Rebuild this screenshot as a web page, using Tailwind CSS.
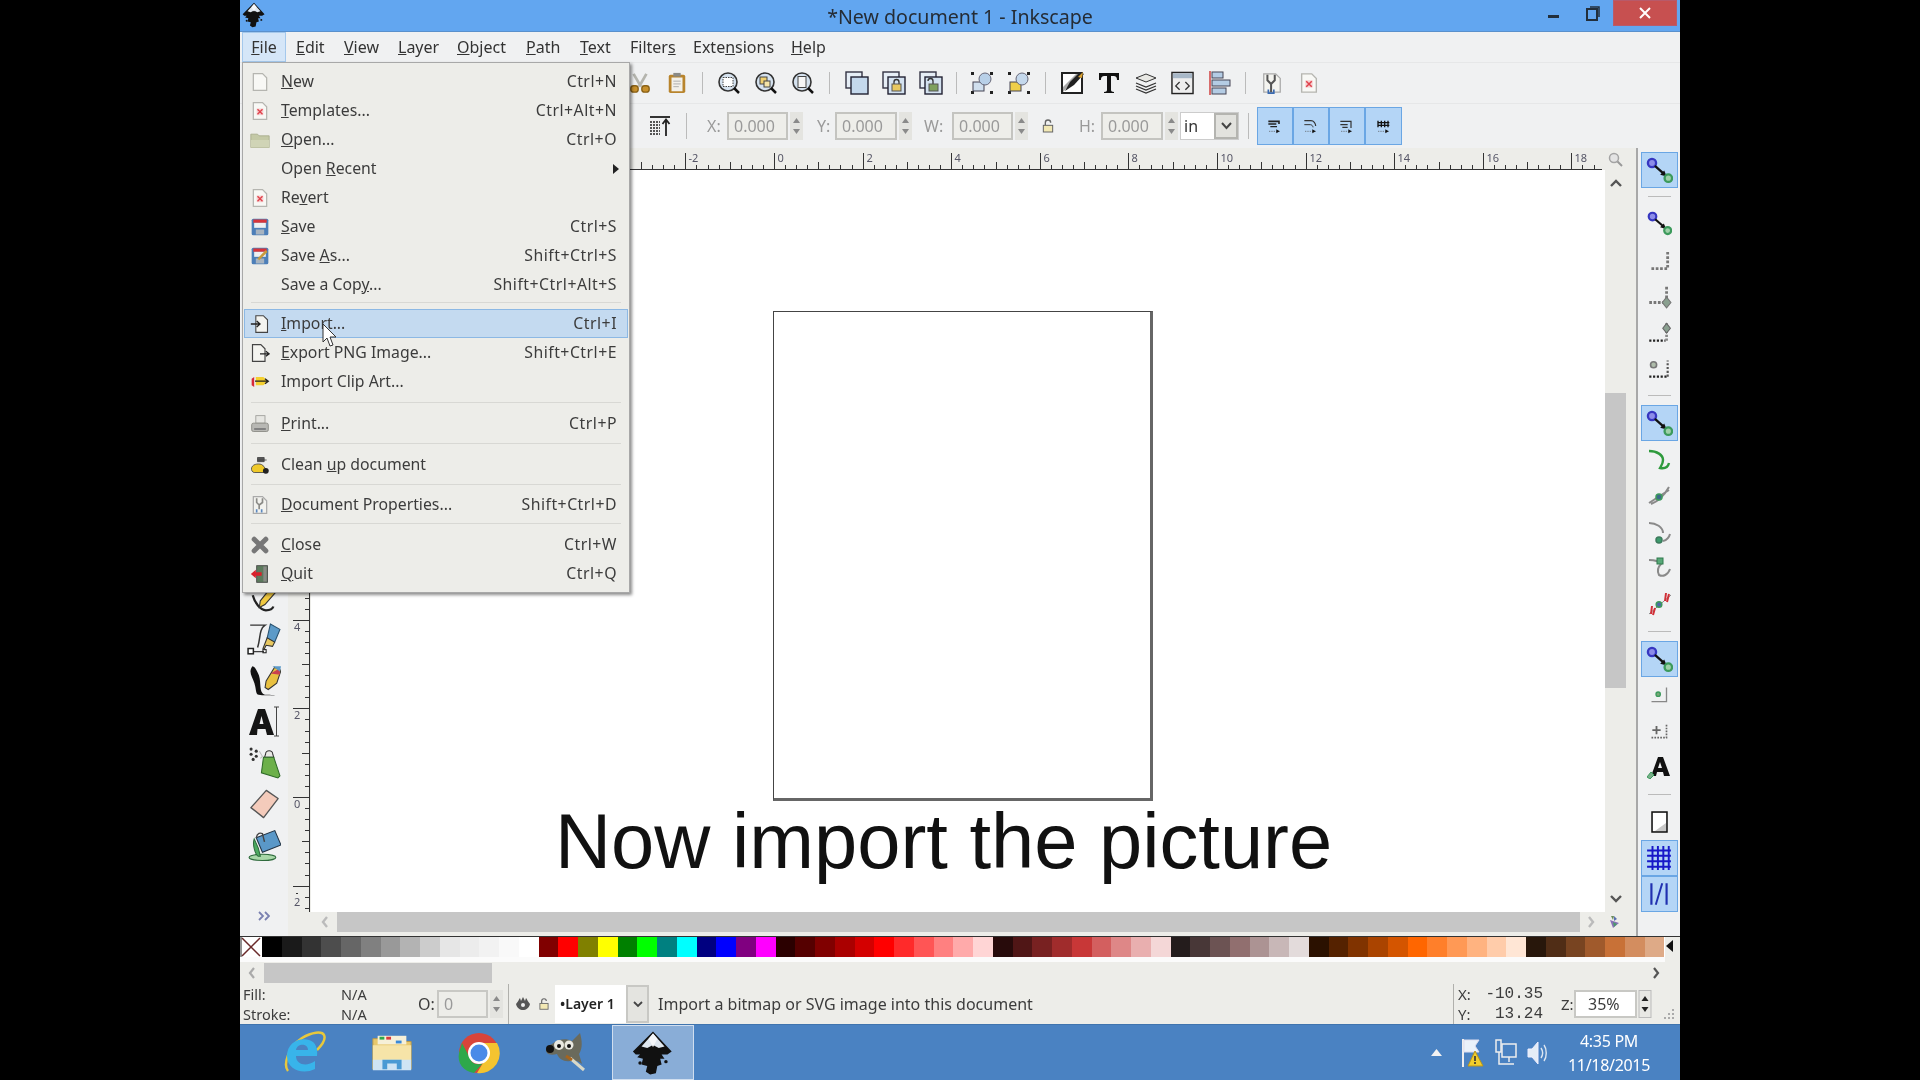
<!DOCTYPE html>
<html lang="en">
<head>
<meta charset="UTF-8">
<title>New document 1 - Inkscape</title>
<script src="https://cdn.jsdelivr.net/npm/@tailwindcss/browser@4"></script>
</head>
<body class="bg-black overflow-hidden">
<!-- shared icons -->
<svg class="absolute w-0 h-0">
  <symbol id="i-page" viewBox="0 0 24 24"><path d="M4 2h11l5 5v15H4z" fill="#f8f8f5" stroke="#b5b5b0" stroke-width="1.5"/></symbol>
  <symbol id="i-pagex" viewBox="0 0 24 24"><path d="M4 2h11l5 5v15H4z" fill="#f8f8f5" stroke="#b5b5b0" stroke-width="1.5"/><rect x="8" y="9" width="8" height="8" fill="#f6d0d0"/><path d="M9 10l6 6M15 10l-6 6" stroke="#e0404a" stroke-width="1.6"/></symbol>
  <symbol id="i-folder" viewBox="0 0 24 24"><path d="M1 5h8l2 2h12v14H1z" fill="#c4c9a6" stroke="#a5aa88"/><path d="M1 12h22v9H1z" fill="#d0d4b6"/></symbol>
  <symbol id="i-save" viewBox="0 0 24 24"><rect x="2" y="2" width="20" height="20" rx="2" fill="#4d7fb8"/><rect x="4" y="3" width="16" height="4" fill="#d8343a"/><rect x="5" y="7" width="14" height="6" fill="#eef0f2"/><rect x="7" y="15" width="10" height="6" fill="#a8b4c0"/></symbol>
  <symbol id="i-saveas" viewBox="0 0 24 24"><rect x="2" y="2" width="20" height="20" rx="2" fill="#4d7fb8"/><rect x="4" y="3" width="16" height="4" fill="#d8343a"/><rect x="5" y="7" width="14" height="6" fill="#eef0f2"/><rect x="7" y="15" width="10" height="6" fill="#a8b4c0"/><path d="M10 16L20 6" stroke="#c89a3c" stroke-width="3"/></symbol>
  <symbol id="i-import" viewBox="0 0 24 24"><path d="M7 2h9l5 5v15H7z" fill="#f4f4f0" stroke="#444" stroke-width="1.3"/><path d="M1 12h10M8 8.500l4 3.500-4 3.500" fill="none" stroke="#222" stroke-width="1.6"/></symbol>
  <symbol id="i-export" viewBox="0 0 24 24"><path d="M3 2h10l5 5v15H3z" fill="#f4f4f0" stroke="#444" stroke-width="1.4"/><path d="M12 13h10M19 10l4 3-4 3" fill="none" stroke="#222" stroke-width="1.6"/></symbol>
  <symbol id="i-clip" viewBox="0 0 24 24"><path d="M2 8l3-2v12l-3-2z" fill="#d8283a"/><path d="M7 6h9l6 5-6 5H7z" fill="#f4d030"/><path d="M6 11h15M18 8l4 3-4 3" fill="none" stroke="#222" stroke-width="1.5"/></symbol>
  <symbol id="i-print" viewBox="0 0 24 24"><rect x="7" y="2" width="11" height="9" fill="#e6e6e2" stroke="#9a9a96"/><rect x="2" y="11" width="20" height="10" rx="2" fill="#b8b8b4" stroke="#85857f"/><rect x="5" y="17" width="14" height="2" fill="#777"/></symbol>
  <symbol id="i-clean" viewBox="0 0 24 24"><path d="M9 6h11M9 3h8v5H9z" fill="#555" stroke="#444"/><path d="M2 15c2-5 10-5 13-3l5 6-2 3H5c-2 0-4-3-3-6z" fill="#efc92a" stroke="#444"/><circle cx="19" cy="19" r="3.500" fill="#222"/></symbol>
  <symbol id="i-docprop" viewBox="0 0 24 24"><path d="M4 2h11l5 5v15H4z" fill="#f2f2ee" stroke="#aaa" stroke-width="1.5"/><path d="M8 4v5l3 3v5M15 4v5l-4 3" fill="none" stroke="#8a8a86" stroke-width="2"/><path d="M8 17v4M14 17v4" stroke="#5a88c0" stroke-width="2"/></symbol>
  <symbol id="i-close" viewBox="0 0 24 24"><path d="M5 5l14 14M19 5L5 19" stroke="#777" stroke-width="6" stroke-linecap="round"/></symbol>
  <symbol id="i-quit" viewBox="0 0 24 24"><rect x="8" y="2" width="13" height="20" fill="#5c7a5c" stroke="#444"/><rect x="16" y="3" width="4" height="18" fill="#8a8a86"/><path d="M1 12l6-5v3h7v4H7v3z" fill="#d8202a"/></symbol>

  <symbol id="i-scissors" viewBox="0 0 24 24"><path d="M5 2l8 14M19 2l-8 14" stroke="#b5b5ae" stroke-width="3"/><rect x="2" y="15" width="8" height="7" rx="3" fill="#c8902c" stroke="#8a6218" stroke-width="1.500"/><rect x="14" y="15" width="8" height="7" rx="3" fill="#c8902c" stroke="#8a6218" stroke-width="1.500"/></symbol>
  <symbol id="i-paste" viewBox="0 0 24 24"><rect x="3" y="3" width="18" height="20" rx="2" fill="#b8842c"/><rect x="6" y="6" width="12" height="15" fill="#f2f0ea"/><rect x="8" y="1" width="8" height="4" fill="#8a8a86"/><path d="M8 10h8M8 13h8M8 16h6" stroke="#aaa"/></symbol>
  <symbol id="i-zoomsel" viewBox="0 0 24 24"><circle cx="11" cy="11" r="9" fill="#d5e2ef" stroke="#333" stroke-width="1.6"/><rect x="6" y="6.500" width="10" height="9" fill="#fff" stroke="#444" stroke-dasharray="1.500 1"/><path d="M17 17l5 5" stroke="#111" stroke-width="2.500"/></symbol>
  <symbol id="i-zoomdraw" viewBox="0 0 24 24"><circle cx="11" cy="11" r="9" fill="#d5e2ef" stroke="#333" stroke-width="1.6"/><rect x="6" y="6" width="7" height="7" fill="#efd070" stroke="#444"/><rect x="10" y="10" width="6" height="6" fill="#f4e4a8" stroke="#444"/><path d="M17 17l5 5" stroke="#111" stroke-width="2.500"/></symbol>
  <symbol id="i-zoompage" viewBox="0 0 24 24"><circle cx="11" cy="11" r="9" fill="#d5e2ef" stroke="#333" stroke-width="1.6"/><rect x="7" y="5.500" width="8" height="11" fill="#f6f6f6" stroke="#444"/><path d="M17 17l5 5" stroke="#111" stroke-width="2.500"/></symbol>
  <symbol id="i-dup" viewBox="0 0 24 24"><rect x="1" y="1" width="16" height="16" fill="#e6eef6" stroke="#334" stroke-width="1.400"/><rect x="6" y="6" width="17" height="17" fill="#c4d8ec" stroke="#223" stroke-width="1.400"/></symbol>
  <symbol id="i-clone" viewBox="0 0 24 24"><rect x="1" y="1" width="16" height="16" fill="#e6eef6" stroke="#334" stroke-width="1.400"/><rect x="6" y="6" width="17" height="17" fill="#d4e2f0" stroke="#223" stroke-width="1.400"/><path d="M12 13v-2a2.500 2.500 0 0 1 5 0v2" fill="none" stroke="#333" stroke-width="1.300"/><rect x="10" y="13" width="9" height="7" fill="#e8c860" stroke="#555"/></symbol>
  <symbol id="i-unlink" viewBox="0 0 24 24"><rect x="1" y="1" width="16" height="16" fill="#e6eef6" stroke="#334" stroke-width="1.400"/><rect x="6" y="6" width="17" height="17" fill="#d4e2f0" stroke="#223" stroke-width="1.400"/><path d="M9 10a2.500 2.500 0 0 1 5 0v3" fill="none" stroke="#333" stroke-width="1.300"/><rect x="10" y="13" width="9" height="7" fill="#7ea05e" stroke="#555"/></symbol>
  <symbol id="i-group" viewBox="0 0 24 24"><g fill="#222"><rect x="1" y="1" width="3" height="3"/><rect x="20" y="1" width="3" height="3"/><rect x="1" y="20" width="3" height="3"/><rect x="20" y="20" width="3" height="3"/></g><rect x="3" y="11" width="11" height="9" fill="#d0dfee" stroke="#445"/><circle cx="15" cy="8" r="6" fill="#b8d0e8" stroke="#667"/></symbol>
  <symbol id="i-ungroup" viewBox="0 0 24 24"><g fill="#222"><rect x="1" y="1" width="3" height="3"/><rect x="20" y="1" width="3" height="3"/><rect x="1" y="20" width="3" height="3"/><rect x="20" y="20" width="3" height="3"/></g><rect x="3" y="11" width="11" height="9" fill="#efcf4a" stroke="#445"/><circle cx="15" cy="8" r="6" fill="#c4d8ec" stroke="#667"/></symbol>
  <symbol id="i-fill" viewBox="0 0 24 24"><rect x="2" y="2" width="20" height="20" fill="#fff" stroke="#222" stroke-width="2"/><path d="M3 21L3 16 16 3h5z" fill="#aaa"/><path d="M5 20l9-6 10-11-4-2-10 10z" fill="#222"/><path d="M18 6l5-5-1 6z" fill="#d8a030"/></symbol>
  <symbol id="i-t" viewBox="0 0 24 24"><path d="M2 2h20v7h-2c0-3-1-4-4-4h-2v14c0 1 1 2 3 2v1H7v-1c2 0 3-1 3-2V5H8C5 5 4 6 4 9H2z" fill="#111"/></symbol>
  <symbol id="i-layers" viewBox="0 0 24 24"><path d="M2 7l10-4 10 4-10 4z" fill="#e8e8e4" stroke="#333"/><path d="M2 12l10 4 10-4M2 15l10 4 10-4M2 18l10 4 10-4" fill="none" stroke="#333" stroke-width="1.300"/></symbol>
  <symbol id="i-xml" viewBox="0 0 24 24"><rect x="1" y="1" width="22" height="22" fill="#eee" stroke="#222" stroke-width="1.500"/><rect x="2" y="2" width="20" height="5" fill="#a8b8c8"/><path d="M9 11l-4 4 4 4M15 11l4 4-4 4" fill="none" stroke="#333" stroke-width="1.400"/></symbol>
  <symbol id="i-align" viewBox="0 0 24 24"><path d="M2 0v24" stroke="#d04040" stroke-width="1.500"/><rect x="4" y="1" width="11" height="6" fill="#b4cce4" stroke="#445"/><rect x="4" y="9" width="18" height="6" fill="#b4cce4" stroke="#445"/><rect x="4" y="17" width="14" height="6" fill="#b4cce4" stroke="#445"/></symbol>
  <symbol id="i-prefs" viewBox="0 0 24 24"><path d="M3 2h13l5 5v15H3z" fill="#f4f4f0" stroke="#aaa" stroke-width="1.400"/><path d="M7 3v6l4 4v9M15 3v6l-4 4" fill="none" stroke="#555" stroke-width="2.200"/><path d="M8 19v4h6v-4" fill="none" stroke="#3a6ab0" stroke-width="1.800"/></symbol>
  <symbol id="i-raise" viewBox="0 0 24 24"><path d="M2 3h20" stroke="#333" stroke-width="2"/><path d="M2 8h10M2 11h10M2 14h10M2 17h10M2 20h10" stroke="#555" stroke-width="2" stroke-dasharray="2 1"/><path d="M18 22V7M14.500 10L18 5.500 21.500 10" fill="none" stroke="#222" stroke-width="1.800"/></symbol>
  <symbol id="i-spin" viewBox="0 0 13 28"><rect width="13" height="28" fill="#e4e4e0"/><path d="M3 11l3.500-5 3.500 5z" fill="#8a8a8a"/><path d="M3 17l3.500 5 3.500-5z" fill="#8a8a8a"/></symbol>
  <symbol id="i-spindark" viewBox="0 0 13 28"><rect x=".5" y=".5" width="12" height="27" fill="#e8e8e4" stroke="#bbb"/><path d="M3 11l3.500-5 3.500 5z" fill="#222"/><path d="M3 17l3.500 5 3.500-5z" fill="#222"/></symbol>
  <symbol id="i-lock" viewBox="0 0 24 24"><path d="M8 11V7a4 4 0 0 1 8 0" fill="none" stroke="#666" stroke-width="2"/><rect x="5" y="11" width="14" height="10" fill="#f2e8b4" stroke="#666" stroke-width="1.500"/></symbol>
  <symbol id="i-snapbtn1" viewBox="0 0 24 24"><path d="M2 5h16v4" fill="none" stroke="#222" stroke-width="2.400"/><path d="M2 9h12M5 13h10" stroke="#222" stroke-width="2"/><path d="M3 20h16" stroke="#555" stroke-dasharray="2 1.500"/><path d="M14 17l5 3-5 3z" fill="#111"/></symbol>
  <symbol id="i-snapbtn2" viewBox="0 0 24 24"><path d="M2 4h10c4 0 7 4 7 8" fill="none" stroke="#333" stroke-width="1.800"/><path d="M2 10h9c2 0 4 2 4 4" fill="none" stroke="#333" stroke-width="1.500"/><path d="M3 20h16" stroke="#555" stroke-dasharray="2 1.500"/><path d="M14 17l5 3-5 3z" fill="#111"/></symbol>
  <symbol id="i-snapbtn3" viewBox="0 0 24 24"><path d="M2 5h16v10" fill="none" stroke="#333" stroke-width="1.800"/><path d="M2 10h11M5 14h8" stroke="#333" stroke-width="1.800"/><path d="M3 20h16" stroke="#555" stroke-dasharray="2 1.500"/><path d="M14 17l5 3-5 3z" fill="#111"/></symbol>
  <symbol id="i-snapbtn4" viewBox="0 0 24 24"><path d="M3 4v10M8 4v10M13 4v10M18 4v10M2 7h18M2 11h18" stroke="#111" stroke-width="2"/><path d="M3 20h16" stroke="#555" stroke-dasharray="2 1.500"/><path d="M14 17l5 3-5 3z" fill="#111"/></symbol>

  <symbol id="n-snap" viewBox="0 0 24 24"><circle cx="6" cy="6" r="3.500" fill="#8c8ce8" stroke="#3636c0" stroke-width="2"/><path d="M8.500 8.500l8 7" stroke="#111" stroke-width="2"/><path d="M18.500 17.500l-5.500-1.500 3.500-3.500z" fill="#111"/><circle cx="20" cy="19" r="3.200" fill="#9ed0a8" stroke="#3c9a5c" stroke-width="2"/></symbol>
  <symbol id="n-bbox" viewBox="0 0 24 24"><path d="M5 20h15V3" fill="none" stroke="#777" stroke-width="2.600" stroke-dasharray="2.500 1.500"/></symbol>
  <symbol id="n-bboxedge" viewBox="0 0 24 24"><path d="M3 18h16V3" fill="none" stroke="#777" stroke-width="2.600" stroke-dasharray="2.500 1.500"/><path d="M19 13l4 5-4 5-4-5z" fill="#8aa090" stroke="#777"/></symbol>
  <symbol id="n-bboxcorner" viewBox="0 0 24 24"><path d="M3 20h15" stroke="#222" stroke-width="2" stroke-dasharray="2 1.500"/><path d="M19 20V3" stroke="#888" stroke-width="2.500" stroke-dasharray="2 1.500"/><path d="M19 4l3.500 4.500-3.500 4.500-3.500-4.500z" fill="#8aa090" stroke="#666"/></symbol>
  <symbol id="n-bboxmid" viewBox="0 0 24 24"><path d="M3 20h16" stroke="#222" stroke-width="2" stroke-dasharray="2 1.500"/><path d="M20 20V5" stroke="#555" stroke-width="2" stroke-dasharray="2 1.500"/><circle cx="7" cy="9" r="2.800" fill="#aebcaa" stroke="#777" stroke-width="1.500"/></symbol>
  <symbol id="n-path" viewBox="0 0 24 24"><path d="M2 3c8 0 14 4 14 9 0 4-2 6-3 8 5 1 8-1 9-5" fill="none" stroke="#2e9a3c" stroke-width="2.400"/></symbol>
  <symbol id="n-pathint" viewBox="0 0 24 24"><path d="M2 19L22 6M4 20C12 17 18 10 22 3" stroke="#8a8a8a" stroke-width="2" fill="none"/><circle cx="12" cy="13" r="3" fill="#3c6a8a" stroke="#3c9a5c" stroke-width="1.500"/></symbol>
  <symbol id="n-pathnode" viewBox="0 0 24 24"><path d="M2 3c7 0 14 4 14 10M16 21c4-1 6-3 7-7" stroke="#8a8a8a" stroke-width="2" fill="none"/><circle cx="12" cy="20" r="3" fill="#3c9a6c" stroke="#3c7a5c" stroke-width="1.500"/></symbol>
  <symbol id="n-pathsmooth" viewBox="0 0 24 24"><path d="M2 4c6 0 10 1 12 4-3 3-4 7-2 11 4 2 9 0 11-6" stroke="#8a8a8a" stroke-width="2" fill="none"/><rect x="10" y="2" width="6" height="6" fill="#58a878" stroke="#2e7a4c"/></symbol>
  <symbol id="n-cusp" viewBox="0 0 24 24"><path d="M2 22L24 3" stroke="#8a8a8a"/><path d="M5 14l-1 8M8 16l-2 7M19 1l-1 8M22 2l-2 8" stroke="#d03038" stroke-width="2"/><circle cx="12" cy="12.500" r="2.800" fill="#4c68a8" stroke="#3c9a5c" stroke-width="1.500"/></symbol>
  <symbol id="n-center" viewBox="0 0 24 24"><path d="M3 20h18V3" fill="none" stroke="#888" stroke-width="1.600"/><circle cx="11" cy="11" r="2.600" fill="#7aa878" stroke="#3c9a5c" stroke-width="1.600"/></symbol>
  <symbol id="n-guide" viewBox="0 0 24 24"><path d="M4 11h10M9 6v10" stroke="#666" stroke-width="2.200"/><path d="M3 20h18V3" fill="none" stroke="#666" stroke-width="2" stroke-dasharray="2 1.500"/></symbol>
  <symbol id="n-textsnap" viewBox="0 0 24 24"><path d="M3 21l1.500-1L11 2h5l7 19h-6l-1-4h-6l-1 4zM11 13h4l-2-6z" fill="#111"/><path d="M0 22l4-5 3 3-4 4z" fill="#7ab08a" stroke="#3c9a5c"/></symbol>
  <symbol id="n-page" viewBox="0 0 24 24"><rect x="5" y="2" width="15" height="20" fill="#c8c8c8" stroke="#111" stroke-width="1.500"/><path d="M6 3h13v10L8 21H6z" fill="#fff"/></symbol>
  <symbol id="n-grid" viewBox="0 0 24 24"><path d="M6 1v22M11 1v22M16 1v22M21 1v22M1 5h22M1 10h22M1 15h22M1 20h22" stroke="#1818c8" stroke-width="1.800"/></symbol>
  <symbol id="n-guides" viewBox="0 0 24 24"><path d="M5 2v20M19 2v20" stroke="#2030b0" stroke-width="2"/><path d="M9 22L15 2" stroke="#2030b0" stroke-width="1.800"/></symbol>

  <symbol id="t-pencil" viewBox="0 0 32 32"><path d="M4 12c2 8 8 16 14 16 4 0 7-1 8-4" fill="none" stroke="#222" stroke-width="2.400"/><path d="M12 18L24 3l6 4-13 15-6 3z" fill="#f0c840" stroke="#333" stroke-width="1.200"/></symbol>
  <symbol id="t-pen" viewBox="0 0 32 32"><path d="M3 2h14c-6 4-4 12-7 21" fill="none" stroke="#333" stroke-width="1.400"/><rect x="1" y="24" width="5" height="5" fill="#fff" stroke="#222" stroke-width="1.400"/><rect x="15" y="25" width="3" height="3" fill="#fff" stroke="#222"/><path d="M6 27h10" stroke="#222"/><path d="M22 1l9 5-5 12-7-4z" fill="#5c9ac8" stroke="#27506e"/><path d="M19 14l7 4-2 4-6-1-2 4-1-1 2-5z" fill="#e8c860" stroke="#333"/></symbol>
  <symbol id="t-calli" viewBox="0 0 32 32"><path d="M5 2C1 8 5 12 7 18c2 7 1 10 4 11 4 1 9 0 16 1-6-2-10 0-12-2-4-4-1-13-5-20C8 4 7 2 5 2z" fill="#111"/><path d="M18 16l8-13 6 3-4 12-8 6-3-2z" fill="#e8c040" stroke="#333"/><path d="M22 9l9-5v6z" fill="#c84050"/><path d="M24 2l8 0-1 5z" fill="#5c9ac8"/></symbol>
  <symbol id="t-text" viewBox="0 0 32 32"><path d="M1 29L10 3h7l9 26h-7l-1.500-6h-8L9 29zM11.500 18h4l-2-8z" fill="#151515"/><path d="M26 1h5M28.500 1v29M26 30h5" stroke="#444"/></symbol>
  <symbol id="t-spray" viewBox="0 0 32 32"><g fill="#333"><circle cx="3" cy="3" r="1.500"/><circle cx="8" cy="5" r="1.500"/><circle cx="3" cy="8" r="1.500"/><circle cx="8" cy="10" r="1.500"/><circle cx="5" cy="13" r="1.500"/></g><path d="M11 5l3 5-2 2" stroke="#bbb" fill="none"/><path d="M17 8a3 3 0 0 1 7 0l1 3h-9z" fill="#e8e8e4" stroke="#333"/><path d="M15 11h10l6 18-2 2-16-5z" fill="#6cb04a" stroke="#2e6a28"/></symbol>
  <symbol id="t-eraser" viewBox="0 0 32 32"><path d="M1 20L18 1l13 9-16 21z" fill="#f4cbbb" stroke="#555" stroke-width="1.500" stroke-linejoin="round"/></symbol>
  <symbol id="t-bucket" viewBox="0 0 32 32"><ellipse cx="14" cy="28" rx="13" ry="3" fill="#a8d8a8" stroke="#2e6a3c"/><path d="M6 10c-2 6 1 15 4 17h2l-2-8z" fill="#4caa60" stroke="#2e6a3c"/><path d="M8 9L26 2l6 14-18 7z" fill="#5a98c8" stroke="#234"/><path d="M8 9c1-5 4-5 6-4l2 8" fill="none" stroke="#444" stroke-width="1.400"/></symbol>

  <symbol id="logo" viewBox="0 0 32 32"><path d="M16 1l13 14-3 2h-4l2 3h-3l1 4-3 1-1 5-4 1-3-2 1-4-4-1 1-4-4-1 2-2H4l-2-2z" fill="#111"/><path d="M16 2.500l8 9-4 1-4-2-4 2-4-1z" fill="#dfe7ef"/><path d="M16 2.500l3 3.500-3 6-3-6z" fill="#f6f8fa"/><circle cx="25" cy="22" r="1.200" fill="#111"/><circle cx="7" cy="23" r="1.200" fill="#111"/></symbol>
</svg>

<div class="relative w-[1440px] h-[1080px] mx-auto flex flex-col bg-[#f0f1f2] overflow-hidden blur-[0.45px] font-['Noto_Sans',sans-serif] text-[#3c3c3c]">

  <!-- Title bar -->
  <div class="relative h-[32px] shrink-0 flex items-center justify-center pt-[2px] bg-[#62a6f0] border-b border-[#5a90cc]">
    <svg class="absolute left-[1px] top-[2px] w-[26px] h-[26px]"><use href="#logo"/></svg>
    <span class="text-[19.6px] text-[#252c35]">*New document 1 - Inkscape</span>
    <div class="absolute right-[3px] top-0 flex items-start">
      <svg class="w-[14px] h-[26px] mr-[24px]" viewBox="0 0 14 26"><rect x="1" y="15" width="11" height="3" fill="#222f3c"/></svg>
      <svg class="w-[16px] h-[26px] mr-[12px]" viewBox="0 0 16 26"><path d="M5 7h9v10" fill="none" stroke="#222f3c" stroke-width="1.500"/><rect x="2" y="9" width="10" height="11" fill="none" stroke="#222f3c" stroke-width="2"/></svg>
      <div class="w-[64px] h-[26px] bg-[#c75050] border border-[#b85a6a] flex items-center justify-center">
        <svg class="w-[12px] h-[12px]" viewBox="0 0 12 12"><path d="M1 1l10 10M11 1L1 11" stroke="#fff" stroke-width="2"/></svg>
      </div>
    </div>
  </div>

  <!-- Menu bar -->
  <div class="h-[30px] shrink-0 flex items-stretch pl-[2px] bg-[#f0f1f2] text-[16px] text-[#333]">
    <div class="w-[44px] flex items-center justify-center bg-[#d5e6f8] border border-[#a4c8ec]"><span><u>F</u>ile</span></div>
    <div class="ml-[10px] w-[28px] flex items-center"><span><u>E</u>dit</span></div>
    <div class="ml-[20px] w-[35px] flex items-center"><span><u>V</u>iew</span></div>
    <div class="ml-[19px] w-[39px] flex items-center"><span><u>L</u>ayer</span></div>
    <div class="ml-[20px] w-[49px] flex items-center"><span><u>O</u>bject</span></div>
    <div class="ml-[20px] w-[33px] flex items-center"><span><u>P</u>ath</span></div>
    <div class="ml-[21px] w-[31px] flex items-center"><span><u>T</u>ext</span></div>
    <div class="ml-[19px] w-[45px] flex items-center"><span>Filter<u>s</u></span></div>
    <div class="ml-[18px] w-[78px] flex items-center"><span>Exte<u>n</u>sions</span></div>
    <div class="ml-[20px] w-[37px] flex items-center"><span><u>H</u>elp</span></div>
  </div>

  <!-- Command bar -->
  <div class="h-[41px] shrink-0 flex items-center pl-[381px] border-t border-[#e6e7e8]">
    <div class="w-[37px] flex justify-center"><svg class="w-[22px] h-[24px]"><use href="#i-scissors"/></svg></div>
    <div class="w-[37px] flex justify-center"><svg class="w-[22px] h-[24px]"><use href="#i-paste"/></svg></div>
    <div class="w-[15px] flex justify-center"><div class="w-px h-[22px] bg-[#bbb]"></div></div>
    <div class="w-[37px] flex justify-center"><svg class="w-[24px] h-[24px]"><use href="#i-zoomsel"/></svg></div>
    <div class="w-[37px] flex justify-center"><svg class="w-[24px] h-[24px]"><use href="#i-zoomdraw"/></svg></div>
    <div class="w-[37px] flex justify-center"><svg class="w-[24px] h-[24px]"><use href="#i-zoompage"/></svg></div>
    <div class="w-[17px] flex justify-center"><div class="w-px h-[22px] bg-[#bbb]"></div></div>
    <div class="w-[37px] flex justify-center"><svg class="w-[24px] h-[24px]"><use href="#i-dup"/></svg></div>
    <div class="w-[37px] flex justify-center"><svg class="w-[24px] h-[24px]"><use href="#i-clone"/></svg></div>
    <div class="w-[37px] flex justify-center"><svg class="w-[24px] h-[24px]"><use href="#i-unlink"/></svg></div>
    <div class="w-[14px] flex justify-center"><div class="w-px h-[22px] bg-[#bbb]"></div></div>
    <div class="w-[37px] flex justify-center"><svg class="w-[24px] h-[24px]"><use href="#i-group"/></svg></div>
    <div class="w-[37px] flex justify-center"><svg class="w-[24px] h-[24px]"><use href="#i-ungroup"/></svg></div>
    <div class="w-[16px] flex justify-center"><div class="w-px h-[22px] bg-[#bbb]"></div></div>
    <div class="w-[37px] flex justify-center"><svg class="w-[24px] h-[24px]"><use href="#i-fill"/></svg></div>
    <div class="w-[37px] flex justify-center"><svg class="w-[24px] h-[24px]"><use href="#i-t"/></svg></div>
    <div class="w-[37px] flex justify-center"><svg class="w-[24px] h-[24px]"><use href="#i-layers"/></svg></div>
    <div class="w-[37px] flex justify-center"><svg class="w-[23px] h-[24px]"><use href="#i-xml"/></svg></div>
    <div class="w-[37px] flex justify-center"><svg class="w-[24px] h-[24px]"><use href="#i-align"/></svg></div>
    <div class="w-[15px] flex justify-center"><div class="w-px h-[22px] bg-[#bbb]"></div></div>
    <div class="w-[37px] flex justify-center"><svg class="w-[22px] h-[24px]"><use href="#i-prefs"/></svg></div>
    <div class="w-[37px] flex justify-center"><svg class="w-[22px] h-[24px]"><use href="#i-pagex"/></svg></div>
  </div>

  <!-- Tool controls bar -->
  <div class="h-[45px] shrink-0 flex items-center pl-[405px] border-t border-[#e6e7e8] text-[16px] text-[#9a9a9a]">
    <div class="w-[30px] flex justify-center"><svg class="w-[24px] h-[24px]"><use href="#i-raise"/></svg></div>
    <div class="ml-[11px] w-px h-[26px] bg-[#bbb]"></div>
    <span class="ml-[20px] w-[20px]">X:</span>
    <div class="w-[61px] h-[28px] pl-[5px] flex items-center bg-[#eeeeea] border-2 border-[#c4c4c0]">0.000</div>
    <svg class="ml-[2px] w-[13px] h-[28px]"><use href="#i-spin"/></svg>
    <span class="ml-[14px] w-[18px]">Y:</span>
    <div class="w-[62px] h-[28px] pl-[5px] flex items-center bg-[#eeeeea] border-2 border-[#c4c4c0]">0.000</div>
    <svg class="ml-[2px] w-[13px] h-[28px]"><use href="#i-spin"/></svg>
    <span class="ml-[12px] w-[28px]">W:</span>
    <div class="w-[61px] h-[28px] pl-[5px] flex items-center bg-[#eeeeea] border-2 border-[#c4c4c0]">0.000</div>
    <svg class="ml-[2px] w-[13px] h-[28px]"><use href="#i-spin"/></svg>
    <svg class="ml-[12px] w-[16px] h-[16px]"><use href="#i-lock"/></svg>
    <span class="ml-[23px] w-[22px]">H:</span>
    <div class="w-[62px] h-[28px] pl-[5px] flex items-center bg-[#eeeeea] border-2 border-[#c4c4c0]">0.000</div>
    <svg class="ml-[2px] w-[13px] h-[28px]"><use href="#i-spin"/></svg>
    <div class="ml-[2px] w-[59px] h-[28px] flex bg-white text-[#333] border border-[#ccc]">
      <span class="flex-1 pl-[3px] leading-[26px]">in</span>
      <div class="w-[24px] flex items-center justify-center bg-[#e2e2de] border-2 border-[#b4b4b0]"><svg class="w-[11px] h-[8px]" viewBox="0 0 11 8"><path d="M1 1l4.500 5L10 1" fill="none" stroke="#444" stroke-width="2"/></svg></div>
    </div>
    <div class="ml-[9px] w-px h-[26px] bg-[#bbb]"></div>
    <div class="ml-[8px] flex">
      <div class="w-[36px] h-[38px] flex items-center justify-center bg-[#b4d5f6] border border-[#6aa6e4]"><svg class="w-[16px] h-[16px]"><use href="#i-snapbtn1"/></svg></div>
      <div class="w-[36px] h-[38px] flex items-center justify-center bg-[#b4d5f6] border border-[#6aa6e4]"><svg class="w-[16px] h-[16px]"><use href="#i-snapbtn2"/></svg></div>
      <div class="w-[36px] h-[38px] flex items-center justify-center bg-[#b4d5f6] border border-[#6aa6e4]"><svg class="w-[16px] h-[16px]"><use href="#i-snapbtn3"/></svg></div>
      <div class="w-[37px] h-[38px] flex items-center justify-center bg-[#b4d5f6] border border-[#6aa6e4]"><svg class="w-[16px] h-[16px]"><use href="#i-snapbtn4"/></svg></div>
    </div>
  </div>

  <!-- Middle: toolbox, canvas, snap bar -->
  <div class="flex-1 flex min-h-0">
    <!-- Toolbox -->
    <div class="w-[48px] shrink-0 flex flex-col items-center pt-[430px] pb-[10px]">
      <div class="h-[41px] flex items-center"><svg class="w-[30px] h-[32px]"><use href="#t-pencil"/></svg></div>
      <div class="h-[41px] flex items-center"><svg class="w-[34px] h-[34px]"><use href="#t-pen"/></svg></div>
      <div class="h-[41px] flex items-center"><svg class="w-[34px] h-[34px]"><use href="#t-calli"/></svg></div>
      <div class="h-[41px] flex items-center"><svg class="w-[32px] h-[32px]"><use href="#t-text"/></svg></div>
      <div class="h-[41px] flex items-center"><svg class="w-[33px] h-[33px]"><use href="#t-spray"/></svg></div>
      <div class="h-[41px] flex items-center"><svg class="w-[29px] h-[32px]"><use href="#t-eraser"/></svg></div>
      <div class="h-[41px] flex items-center"><svg class="w-[33px] h-[34px]"><use href="#t-bucket"/></svg></div>
      <div class="mt-auto h-[20px] flex items-center"><svg class="w-[12px] h-[10px]" viewBox="0 0 12 10"><path d="M1 1l4 4-4 4M7 1l4 4-4 4" fill="none" stroke="#7a80b0" stroke-width="1.800"/></svg></div>
    </div>

    <!-- Canvas column -->
    <div class="w-[1348px] shrink-0 flex flex-col bg-[#edede9]">
      <div class="h-[22px] shrink-0 flex">
        <svg id="hruler" class="w-[1317px] h-[22px]" viewBox="0 0 1317 22"></svg>
        <div class="w-[21px] flex items-center justify-center"><svg class="w-[15px] h-[15px]" viewBox="0 0 15 15"><circle cx="6" cy="6" r="4.500" fill="#e4e4e4" stroke="#a4a4a4" stroke-width="1.500"/><path d="M9.500 9.500L14 14" stroke="#999" stroke-width="2"/></svg></div>
      </div>
      <div class="flex-1 flex min-h-0">
        <svg id="vruler" class="w-[23px] h-[742px] shrink-0" viewBox="0 0 23 742"></svg>
        <!-- Page on the canvas -->
        <div class="relative w-[1294px] shrink-0 bg-white overflow-hidden">
          <div class="absolute left-[462px] top-[141px] w-[380px] h-[490px] bg-white border border-[#444] border-r-[3px] border-b-[3px] border-r-[#666] border-b-[#666]"></div>
          <p class="absolute left-[244px] top-[632px] text-[77.7px] leading-[78px] whitespace-nowrap text-[#111] font-['Liberation_Sans',sans-serif]">Now import the picture</p>
        </div>
        <!-- Vertical scrollbar -->
        <div class="w-[21px] shrink-0 flex flex-col">
          <div class="h-[26px] shrink-0 flex items-center justify-center"><svg class="w-[12px] h-[8px]" viewBox="0 0 12 8"><path d="M1 7l5-5 5 5" fill="none" stroke="#555" stroke-width="2.400"/></svg></div>
          <div class="h-[197px] shrink-0"></div>
          <div class="h-[295px] shrink-0 bg-[#c6c6c6]"></div>
          <div class="flex-1"></div>
          <div class="h-[26px] shrink-0 flex items-center justify-center"><svg class="w-[12px] h-[8px]" viewBox="0 0 12 8"><path d="M1 1l5 5 5-5" fill="none" stroke="#555" stroke-width="2.400"/></svg></div>
        </div>
        <div class="w-[10px] shrink-0"></div>
      </div>
      <!-- Horizontal scrollbar -->
      <div class="h-[24px] shrink-0 flex pb-[4px]">
        <div class="w-[49px] shrink-0 flex items-center justify-end pr-[8px]"><svg class="w-[8px] h-[12px]" viewBox="0 0 8 12"><path d="M6 1L2 6l4 5" fill="none" stroke="#bbb" stroke-width="2.400"/></svg></div>
        <div class="w-[1243px] shrink-0 bg-[#c6c6c6]"></div>
        <div class="w-[22px] shrink-0 flex items-center justify-center"><svg class="w-[8px] h-[12px]" viewBox="0 0 8 12"><path d="M2 1l4 5-4 5" fill="none" stroke="#bbb" stroke-width="2.400"/></svg></div>
        <div class="w-[26px] shrink-0 flex items-center justify-center"><svg class="w-[12px] h-[14px]" viewBox="0 0 12 14"><path d="M2 1h3l-1 4z" fill="#6a8a5a"/><path d="M5 1l3 3-3 2z" fill="#5a70b0"/><path d="M1 5l9 3-6 5z" fill="#8a70b8"/><path d="M4 7l4 2-3 3z" fill="#4a9a6a"/></svg></div>
      </div>
    </div>

    <!-- Snap bar -->
    <div class="flex-1 flex flex-col items-center pt-[4px] border-l-2 border-[#a8a8a8] bg-[#f0f1f2]">
      <div class="w-[37px] h-[36px] shrink-0 flex items-center justify-center bg-[#b4d5f6] border border-[#6aa6e4]"><svg class="w-[28px] h-[28px]"><use href="#n-snap"/></svg></div>
      <div class="h-[17px] shrink-0 flex items-center"><div class="w-[23px] h-px bg-[#bbb]"></div></div>
      <div class="h-[36px] shrink-0 flex items-center"><svg class="w-[26px] h-[26px]"><use href="#n-snap"/></svg></div>
      <div class="h-[37px] shrink-0 flex items-center"><svg class="w-[26px] h-[26px]"><use href="#n-bbox"/></svg></div>
      <div class="h-[36px] shrink-0 flex items-center"><svg class="w-[26px] h-[26px]"><use href="#n-bboxedge"/></svg></div>
      <div class="h-[36px] shrink-0 flex items-center"><svg class="w-[26px] h-[26px]"><use href="#n-bboxcorner"/></svg></div>
      <div class="h-[36px] shrink-0 flex items-center"><svg class="w-[26px] h-[26px]"><use href="#n-bboxmid"/></svg></div>
      <div class="h-[19px] shrink-0 flex items-center"><div class="w-[23px] h-px bg-[#bbb]"></div></div>
      <div class="w-[37px] h-[36px] shrink-0 flex items-center justify-center bg-[#b4d5f6] border border-[#6aa6e4]"><svg class="w-[28px] h-[28px]"><use href="#n-snap"/></svg></div>
      <div class="h-[37px] shrink-0 flex items-center"><svg class="w-[24px] h-[24px]"><use href="#n-path"/></svg></div>
      <div class="h-[36px] shrink-0 flex items-center"><svg class="w-[24px] h-[24px]"><use href="#n-pathint"/></svg></div>
      <div class="h-[36px] shrink-0 flex items-center"><svg class="w-[24px] h-[24px]"><use href="#n-pathnode"/></svg></div>
      <div class="h-[36px] shrink-0 flex items-center"><svg class="w-[24px] h-[24px]"><use href="#n-pathsmooth"/></svg></div>
      <div class="h-[36px] shrink-0 flex items-center"><svg class="w-[24px] h-[24px]"><use href="#n-cusp"/></svg></div>
      <div class="h-[19px] shrink-0 flex items-center"><div class="w-[23px] h-px bg-[#bbb]"></div></div>
      <div class="w-[37px] h-[36px] shrink-0 flex items-center justify-center bg-[#b4d5f6] border border-[#6aa6e4]"><svg class="w-[28px] h-[28px]"><use href="#n-snap"/></svg></div>
      <div class="h-[36px] shrink-0 flex items-center"><svg class="w-[20px] h-[20px]"><use href="#n-center"/></svg></div>
      <div class="h-[36px] shrink-0 flex items-center"><svg class="w-[20px] h-[20px]"><use href="#n-guide"/></svg></div>
      <div class="h-[36px] shrink-0 flex items-center"><svg class="w-[24px] h-[24px]"><use href="#n-textsnap"/></svg></div>
      <div class="h-[19px] shrink-0 flex items-center"><div class="w-[23px] h-px bg-[#bbb]"></div></div>
      <div class="h-[36px] shrink-0 flex items-center"><svg class="w-[24px] h-[24px]"><use href="#n-page"/></svg></div>
      <div class="w-[37px] h-[36px] shrink-0 flex items-center justify-center bg-[#b4d5f6] border border-[#6aa6e4]"><svg class="w-[26px] h-[26px]"><use href="#n-grid"/></svg></div>
      <div class="w-[37px] h-[36px] shrink-0 flex items-center justify-center bg-[#b4d5f6] border border-[#6aa6e4]"><svg class="w-[26px] h-[26px]"><use href="#n-guides"/></svg></div>
    </div>
  </div>

  <!-- Palette -->
  <div class="h-[27px] shrink-0 relative bg-[#edede9] border-t border-[#333]">
    <div class="flex h-[20px] w-[1425px] overflow-hidden bg-white">
      <svg class="w-[22px] h-[20px] shrink-0" viewBox="0 0 22 20"><path d="M2 1l18 18M20 1L2 19" stroke="#6a2a2a" stroke-width="1.500"/><path d="M1 0v20" stroke="#222"/></svg>
      <div id="swatches" class="flex"></div>
    </div>
    <div class="h-[5px] w-[1425px] bg-[#fbfbfb]"></div>
    <svg class="absolute right-[7px] top-[3px] w-[7px] h-[12px]" viewBox="0 0 7 12"><path d="M7 0v12L0 6z" fill="#111"/></svg>
  </div>

  <!-- Palette scrollbar -->
  <div class="h-[21px] shrink-0 flex bg-[#edede9] pb-px">
    <div class="w-[24px] flex items-center justify-center"><svg class="w-[8px] h-[12px]" viewBox="0 0 8 12"><path d="M6 1L2 6l4 5" fill="none" stroke="#aaa" stroke-width="2.200"/></svg></div>
    <div class="w-[228px] bg-[#c6c6c6]"></div>
    <div class="flex-1"></div>
    <div class="w-[20px] mr-[14px] flex items-center justify-center"><svg class="w-[8px] h-[12px]" viewBox="0 0 8 12"><path d="M2 1l4 5-4 5" fill="none" stroke="#555" stroke-width="2.200"/></svg></div>
  </div>

  <!-- Status bar -->
  <div class="h-[40px] shrink-0 flex items-center bg-[#edede9] text-[15px] text-[#3c3c3c]">
    <div class="w-[170px] pl-[3px] grid grid-cols-[98px_1fr] leading-[20px] text-[14.500px]">
      <span>Fill:</span><span>N/A</span>
      <span>Stroke:</span><span>N/A</span>
    </div>
    <span class="ml-[8px] w-[19px] text-[16px]">O:</span>
    <div class="w-[51px] h-[28px] pl-[5px] flex items-center bg-[#edede9] border-2 border-[#c8c8c4] text-[#9a9a9a] text-[16px]">0</div>
    <svg class="ml-[2px] w-[13px] h-[28px]"><use href="#i-spin"/></svg>
    <div class="ml-[5px] w-px h-[40px] bg-[#b0b0ac]"></div>
    <svg class="ml-[6px] w-[16px] h-[16px]" viewBox="0 0 16 16"><path d="M1 8c2-2 3-5 4-6l1 3 2-4 2 4 1-3c1 1 2 4 4 6-1 4-4 6-7 6s-6-2-7-6z" fill="#555"/><circle cx="8" cy="9" r="2" fill="#eee"/></svg>
    <svg class="ml-[6px] w-[14px] h-[16px]"><use href="#i-lock"/></svg>
    <div class="ml-[4px] w-[94px] h-[38px] flex bg-white">
      <span class="w-[71px] pl-[5px] leading-[38px] font-semibold text-[14px] text-[#222]">•Layer 1</span>
      <div class="flex-1 flex items-center justify-center bg-[#e4e4e0] border-2 border-[#c8c8c4]"><svg class="w-[10px] h-[7px]" viewBox="0 0 10 7"><path d="M1 1l4 4 4-4" fill="none" stroke="#444" stroke-width="1.800"/></svg></div>
    </div>
    <span class="ml-[9px] text-[16px] whitespace-nowrap">Import a bitmap or SVG image into this document</span>
    <div class="flex-1"></div>
    <div class="w-px h-[40px] bg-[#b0b0ac]"></div>
    <div class="ml-[4px] w-[85px] grid grid-cols-[20px_1fr] leading-[20px] text-[15px]">
      <span>X:</span><span class="text-right font-['Liberation_Mono',monospace] text-[16px]">-10.35</span>
      <span>Y:</span><span class="text-right font-['Liberation_Mono',monospace] text-[16px]">13.24</span>
    </div>
    <span class="ml-[18px] w-[11px] text-[15px]">Z:</span>
    <div class="ml-[2px] w-[63px] h-[28px] pl-[12px] flex items-center bg-white border-2 border-[#c8c8c4] text-[16px]">35%</div>
    <svg class="ml-px w-[14px] h-[28px]"><use href="#i-spindark"/></svg>
    <svg class="ml-[9px] w-[14px] h-[14px] self-end mb-[3px]" viewBox="0 0 14 14"><g fill="#aaa"><rect x="11" y="2" width="2" height="2"/><rect x="7" y="6" width="2" height="2"/><rect x="11" y="6" width="2" height="2"/><rect x="3" y="10" width="2" height="2"/><rect x="7" y="10" width="2" height="2"/><rect x="11" y="10" width="2" height="2"/></g></svg>
    <div class="w-[5px]"></div>
  </div>

  <!-- Taskbar -->
  <div class="h-[56px] shrink-0 flex items-center bg-[#4a82c2] border-t border-[#3f74ae] text-white">
    <div class="ml-[42px] w-[44px] flex justify-center">
      <svg class="w-[44px] h-[44px]" viewBox="0 0 44 44"><path d="M6 40C1 34 6 16 20 7 30 1 40 0 42 4c2 4-2 10-7 15" fill="none" stroke="#e8c83c" stroke-width="2.500"/><path d="M35 25H14c0 9 11 11 19 5v8c-12 6-28 1-28-13 0-13 12-19 22-16 7 2 9 9 8 16zM14 19h12c0-7-11-7-12 0z" fill="#38b4ea"/></svg>
    </div>
    <div class="ml-[44px] w-[44px] flex justify-center">
      <svg class="w-[46px] h-[46px]" viewBox="0 0 46 46"><path d="M3 8h15l3 3h22v29H3z" fill="#e8c86c" stroke="#b89a4c"/><rect x="8" y="5" width="30" height="9" fill="#f6f0d8"/><rect x="10" y="6" width="5" height="3" fill="#2ea84a"/><rect x="17" y="6" width="5" height="3" fill="#d83a3a"/><rect x="27" y="10" width="6" height="3" fill="#3a8ad8"/><path d="M3 15h40v25H3z" fill="#f6e4a8"/><path d="M3 30h40v11H3z" fill="#cfe4f4"/><path d="M13 40V30h20v10h-5v-6H18v6z" fill="#4a9ad4"/></svg>
    </div>
    <div class="ml-[43px] w-[44px] flex justify-center">
      <svg class="w-[44px] h-[44px]" viewBox="0 0 44 44"><circle cx="22" cy="22" r="20" fill="#d8443a"/><path d="M5 12L15 31A10 10 0 0 0 26 32L17 42C6 40 0 32 2 22z" fill="#2ea84a"/><path d="M22 12h18A20 20 0 0 1 20 42l9-15A10 10 0 0 0 22 12z" fill="#f4c430"/><circle cx="22" cy="22" r="11" fill="#fff"/><circle cx="22" cy="22" r="8.500" fill="#4a8ae8"/></svg>
    </div>
    <div class="ml-[43px] w-[48px] flex justify-center">
      <svg class="w-[48px] h-[42px]" viewBox="0 0 48 42"><path d="M36 1l-8 8c-6-3-14-2-20 3-5 2-7 6-5 9 2 2 6 2 10 1 2 5 7 8 13 7 5-1 9 0 12 3l-3-10c4-6 3-14 1-21z" fill="#6a6a5c"/><circle cx="6" cy="17" r="4" fill="#111"/><circle cx="15" cy="13" r="5" fill="#e8e8e0"/><circle cx="15" cy="14" r="2" fill="#111"/><circle cx="25" cy="13" r="4.500" fill="#e8e8e0"/><circle cx="25" cy="14" r="2" fill="#111"/><path d="M26 26l14 12" stroke="#d8d8c8" stroke-width="3"/><path d="M22 24l6 4" stroke="#a8641c" stroke-width="3"/></svg>
    </div>
    <div class="ml-[20px] w-[82px] h-[55px] flex items-center justify-center bg-white/35 border border-white/60">
      <svg class="w-[46px] h-[46px]" viewBox="0 0 32 32"><use href="#logo"/></svg>
    </div>
    <div class="flex-1"></div>
    <svg class="w-[11px] h-[7px] mr-[19px]" viewBox="0 0 11 7"><path d="M0 7l5.500-7L11 7z" fill="#f2f2f2"/></svg>
    <svg class="w-[24px] h-[30px] mr-[10px]" viewBox="0 0 24 30"><path d="M2 1v28" stroke="#eee" stroke-width="2"/><path d="M3 2h15l-4 6 4 6H3z" fill="#eaf2fa" stroke="#dde"/><path d="M14 13l8 15H7z" fill="#f2ce2c" stroke="#b8961c"/><path d="M14 18v5M14 24v2" stroke="#333" stroke-width="1.600"/></svg>
    <svg class="w-[22px] h-[28px] mr-[10px]" viewBox="0 0 22 28"><rect x="1" y="1" width="5" height="12" fill="none" stroke="#eee" stroke-width="1.500"/><rect x="7" y="5" width="14" height="13" fill="none" stroke="#eee" stroke-width="1.500"/><path d="M4 13v12h12M14 18v5M9 25h10" fill="none" stroke="#eee" stroke-width="1.500"/></svg>
    <svg class="w-[22px] h-[26px] mr-[15px]" viewBox="0 0 22 26"><path d="M1 9h4l6-7v22l-6-7H1z" fill="#e4edf6" stroke="#eef"/><path d="M14 8c2 3 2 7 0 10M17 5c3 4 3 12 0 16" fill="none" stroke="#dde7f2" stroke-width="1.400"/></svg>
    <div class="w-[90px] mr-[26px] flex flex-col items-center text-[16px] tracking-[-0.3px] leading-[24px]">
      <span>4:35 PM</span>
      <span>11/18/2015</span>
    </div>
  </div>

  <!-- File menu -->
  <div class="absolute left-[2px] top-[62px] w-[388px] h-[531px] flex flex-col pt-[4px] bg-[#edede9] border border-[#a8a8a8] shadow-[2px_2px_3px_rgba(0,0,0,0.45)] text-[15.8px] text-[#3c3c3c]">
    <div class="h-[29px] flex items-center"><svg class="ml-[7px] w-[20px] h-[20px]"><use href="#i-page"/></svg><span class="ml-[11px]"><u>N</u>ew</span><span class="ml-auto mr-[12px] tracking-[0.5px]">Ctrl+N</span></div>
    <div class="h-[29px] flex items-center"><svg class="ml-[7px] w-[20px] h-[20px]"><use href="#i-pagex"/></svg><span class="ml-[11px]"><u>T</u>emplates...</span><span class="ml-auto mr-[12px] tracking-[0.5px]">Ctrl+Alt+N</span></div>
    <div class="h-[29px] flex items-center"><svg class="ml-[7px] w-[20px] h-[20px]"><use href="#i-folder"/></svg><span class="ml-[11px]"><u>O</u>pen...</span><span class="ml-auto mr-[12px] tracking-[0.5px]">Ctrl+O</span></div>
    <div class="h-[29px] flex items-center pl-[38px]"><span>Open <u>R</u>ecent</span><svg class="ml-auto mr-[10px] w-[6px] h-[10px]" viewBox="0 0 6 10"><path d="M0 0l6 5-6 5z" fill="#222"/></svg></div>
    <div class="h-[29px] flex items-center"><svg class="ml-[7px] w-[20px] h-[20px]"><use href="#i-pagex"/></svg><span class="ml-[11px]">Re<u>v</u>ert</span></div>
    <div class="h-[29px] flex items-center"><svg class="ml-[7px] w-[20px] h-[20px]"><use href="#i-save"/></svg><span class="ml-[11px]"><u>S</u>ave</span><span class="ml-auto mr-[12px] tracking-[0.5px]">Ctrl+S</span></div>
    <div class="h-[29px] flex items-center"><svg class="ml-[7px] w-[20px] h-[20px]"><use href="#i-saveas"/></svg><span class="ml-[11px]">Save <u>A</u>s...</span><span class="ml-auto mr-[12px] tracking-[0.5px]">Shift+Ctrl+S</span></div>
    <div class="h-[29px] flex items-center pl-[38px]"><span>Save a Cop<u>y</u>...</span><span class="ml-auto mr-[12px] tracking-[0.5px]">Shift+Ctrl+Alt+S</span></div>
    <div class="mt-[3px] mb-[6px] mx-[8px] h-px bg-[#d8d8d4]"></div>
    <div class="h-[29px] mx-[1px] flex items-center bg-[#c4daf0] border border-[#8cb8e4]"><svg class="ml-[5px] w-[20px] h-[20px]"><use href="#i-import"/></svg><span class="ml-[11px]"><u>I</u>mport...</span><span class="ml-auto mr-[10px] tracking-[0.5px]">Ctrl+I</span></div>
    <div class="h-[29px] flex items-center"><svg class="ml-[7px] w-[20px] h-[20px]"><use href="#i-export"/></svg><span class="ml-[11px]"><u>E</u>xport PNG Image...</span><span class="ml-auto mr-[12px] tracking-[0.5px]">Shift+Ctrl+E</span></div>
    <div class="h-[29px] flex items-center"><svg class="ml-[7px] w-[20px] h-[20px]"><use href="#i-clip"/></svg><span class="ml-[11px]">Import Clip Art...</span></div>
    <div class="mt-[6px] mb-[6px] mx-[8px] h-px bg-[#d8d8d4]"></div>
    <div class="h-[29px] flex items-center"><svg class="ml-[7px] w-[20px] h-[20px]"><use href="#i-print"/></svg><span class="ml-[11px]"><u>P</u>rint...</span><span class="ml-auto mr-[12px] tracking-[0.5px]">Ctrl+P</span></div>
    <div class="mt-[5px] mb-[6px] mx-[8px] h-px bg-[#d8d8d4]"></div>
    <div class="h-[29px] flex items-center"><svg class="ml-[7px] w-[20px] h-[20px]"><use href="#i-clean"/></svg><span class="ml-[11px]">Clean <u>u</u>p document</span></div>
    <div class="mt-[5px] mb-[5px] mx-[8px] h-px bg-[#d8d8d4]"></div>
    <div class="h-[29px] flex items-center"><svg class="ml-[7px] w-[20px] h-[20px]"><use href="#i-docprop"/></svg><span class="ml-[11px]"><u>D</u>ocument Properties...</span><span class="ml-auto mr-[12px] tracking-[0.5px]">Shift+Ctrl+D</span></div>
    <div class="mt-[4px] mb-[6px] mx-[8px] h-px bg-[#d8d8d4]"></div>
    <div class="h-[29px] flex items-center"><svg class="ml-[7px] w-[20px] h-[20px]"><use href="#i-close"/></svg><span class="ml-[11px]"><u>C</u>lose</span><span class="ml-auto mr-[12px] tracking-[0.5px]">Ctrl+W</span></div>
    <div class="h-[29px] flex items-center"><svg class="ml-[7px] w-[20px] h-[20px]"><use href="#i-quit"/></svg><span class="ml-[11px]"><u>Q</u>uit</span><span class="ml-auto mr-[12px] tracking-[0.5px]">Ctrl+Q</span></div>
  </div>

  <!-- Mouse pointer -->
  <svg class="absolute left-[82px] top-[323px] w-[17px] h-[24px]" viewBox="0 0 17 24"><path d="M1 1v18l4-4 3 8 3-1-3-8h6z" fill="#fff" stroke="#333"/></svg>
</div>

<script>
  // Palette colours, left to right
  const colors = ['#000000','#1a1a1a','#333333','#4d4d4d','#666666','#808080','#999999','#b3b3b3','#cccccc','#e6e6e6','#ececec','#f2f2f2','#f9f9f9','#ffffff',
    '#800000','#ff0000','#808000','#ffff00','#008000','#00ff00','#008080','#00ffff','#000080','#0000ff','#800080','#ff00ff',
    '#2b0000','#550000','#800000','#aa0000','#d40000','#ff0000','#ff2a2a','#ff5555','#ff8080','#ffaaaa','#ffd5d5',
    '#280b0b','#501616','#782121','#a02c2c','#c83737','#d35f5f','#de8787','#e9afaf','#f4d7d7',
    '#241c1c','#483737','#6c5353','#916f6f','#ac9393','#c8b7b7','#e3dbdb',
    '#2b1100','#552200','#803300','#aa4400','#d45500','#ff6600','#ff7f2a','#ff9955','#ffb380','#ffccaa','#ffe6d5',
    '#28170b','#502d16','#784421','#a05a2c','#c87137','#d38d5f','#deaa87'];
  const swatches = document.getElementById('swatches');
  colors.forEach(c => {
    const s = document.createElement('div');
    s.style.width = '19.75px';
    s.style.height = '20px';
    s.style.background = c;
    swatches.appendChild(s);
  });

  // Rulers: 44.3px per inch, 8 ticks per 2 inches
  const NS = 'http://www.w3.org/2000/svg';
  const step = 88.6 / 8;

  function addLine(svg, x1, y1, x2, y2) {
    const l = document.createElementNS(NS, 'line');
    l.setAttribute('x1', x1); l.setAttribute('y1', y1);
    l.setAttribute('x2', x2); l.setAttribute('y2', y2);
    l.setAttribute('stroke', '#333');
    svg.appendChild(l);
  }

  function addLabel(svg, x, y, str) {
    const t = document.createElementNS(NS, 'text');
    t.setAttribute('x', x); t.setAttribute('y', y);
    t.setAttribute('font-size', '11');
    t.setAttribute('fill', '#556');
    t.textContent = str;
    svg.appendChild(t);
  }

  // Horizontal ruler, labels under the open menu are left out
  const hr = document.getElementById('hruler');
  const zeroX = 774 - 288;
  const endX = 1314;
  addLine(hr, 340, 21.5, endX, 21.5);
  for (let i = -12; i * step + zeroX < endX; i++) {
    const x = Math.round(i * step + zeroX) + 0.5;
    if (i % 8 === 0) {
      addLine(hr, x, 5, x, 21);
      addLabel(hr, x + 3, 14, String(i / 4));
    } else if (i % 4 === 0) {
      addLine(hr, x, 14, x, 21);
    } else {
      addLine(hr, x, 17, x, 21);
    }
  }

  // Vertical ruler, values go up the screen
  const vr = document.getElementById('vruler');
  const zeroY = 797 - 170;
  addLine(vr, 21.5, 420, 21.5, 742);
  for (let i = -10; i <= 18; i++) {
    const y = Math.round(zeroY - i * step) + 0.5;
    if (y > 742) continue;
    if (i % 8 === 0) {
      addLine(vr, 5, y, 21, y);
      if (i < 0) addLine(vr, 8, y + 7, 10, y + 7);
      addLabel(vr, 6, y + (i < 0 ? 19 : 10), String(Math.abs(i / 4)));
    } else if (i % 4 === 0) {
      addLine(vr, 14, y, 21, y);
    } else {
      addLine(vr, 17, y, 21, y);
    }
  }
</script>
</body>
</html>
